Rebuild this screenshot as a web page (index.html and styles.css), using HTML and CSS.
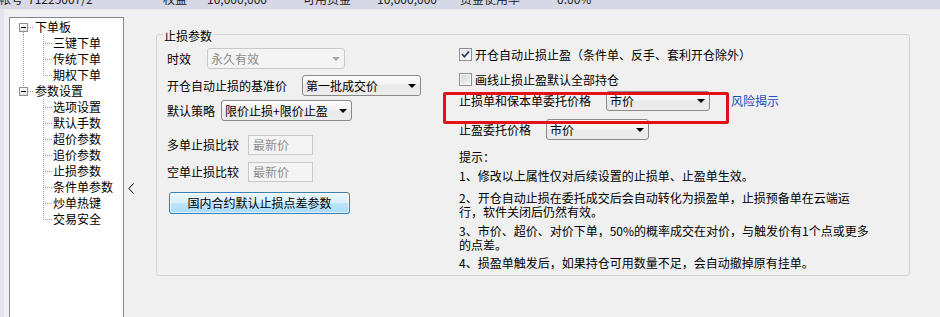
FILE: index.html
```html
<!DOCTYPE html>
<html lang="zh-CN">
<head>
    <meta charset="UTF-8">
    <title>止损参数</title>
    <link rel="stylesheet" href="styles.css">
</head>
<body>
    <div class="topbar">
        <div class="topbar-text">
            <span>资金帐号</span>
            <span>71225007/2</span>
            <span>权益</span>
            <span>10,000,000</span>
            <span>可用资金</span>
            <span>10,000,000</span>
            <span>资金使用率</span>
            <span>0.00%</span>
        </div>
    </div>

    <div class="main">
        <div class="edge"></div>

        <div class="tree">
            <div class="node root first"><span class="toggle"></span><span class="twig"></span><span class="label">下单板</span></div>
            <div class="node leaf cont"><span class="branch"></span><span class="label">三键下单</span></div>
            <div class="node leaf cont"><span class="branch"></span><span class="label">传统下单</span></div>
            <div class="node leaf cont last"><span class="branch"></span><span class="label">期权下单</span></div>
            <div class="node root second"><span class="toggle"></span><span class="twig"></span><span class="label">参数设置</span></div>
            <div class="node leaf"><span class="branch"></span><span class="label">选项设置</span></div>
            <div class="node leaf"><span class="branch"></span><span class="label">默认手数</span></div>
            <div class="node leaf"><span class="branch"></span><span class="label">超价参数</span></div>
            <div class="node leaf"><span class="branch"></span><span class="label">追价参数</span></div>
            <div class="node leaf"><span class="branch"></span><span class="label">止损参数</span></div>
            <div class="node leaf"><span class="branch"></span><span class="label">条件单参数</span></div>
            <div class="node leaf"><span class="branch"></span><span class="label">炒单热键</span></div>
            <div class="node leaf last"><span class="branch"></span><span class="label">交易安全</span></div>
        </div>

        <div class="collapse">
            <svg width="6" height="11" viewBox="0 0 6 11"><polyline points="5.5,0.5 0.8,5.5 5.5,10.5" fill="none" stroke="#000" stroke-width="1"/></svg>
        </div>

        <fieldset class="group">
            <legend>止损参数</legend>
            <div class="cols">
                <div class="col-left">
                    <div class="row">
                        <span class="lbl lbl-validity">时效</span>
                        <div class="combo disabled combo-validity"><span>永久有效</span><i class="arrow"></i></div>
                    </div>
                    <div class="row row-base">
                        <span class="lbl lbl-base">开仓自动止损的基准价</span>
                        <div class="combo combo-base"><span>第一批成交价</span><i class="arrow"></i></div>
                    </div>
                    <div class="row row-strategy">
                        <span class="lbl lbl-strategy">默认策略</span>
                        <div class="combo combo-strategy"><span>限价止损+限价止盈</span><i class="arrow"></i></div>
                    </div>
                    <div class="row row-long">
                        <span class="lbl lbl-compare">多单止损比较</span>
                        <div class="textbox">最新价</div>
                    </div>
                    <div class="row row-short">
                        <span class="lbl lbl-compare">空单止损比较</span>
                        <div class="textbox">最新价</div>
                    </div>
                    <button class="btn">国内合约默认止损点差参数</button>
                </div>

                <div class="col-right">
                    <div class="check-row">
                        <span class="checkbox checked">
                            <svg width="11" height="11" viewBox="0 0 11 11"><path d="M2 5.2 L4.4 7.8 L9 2.4" fill="none" stroke="#2b3a5c" stroke-width="1.7"/></svg>
                        </span>
                        <span>开仓自动止损止盈（条件单、反手、套利开仓除外）</span>
                    </div>
                    <div class="check-row check-second">
                        <span class="checkbox"></span>
                        <span>画线止损止盈默认全部持仓</span>
                    </div>
                    <div class="row row-order">
                        <div class="highlight">
                            <span class="lbl lbl-order">止损单和保本单委托价格</span>
                            <div class="combo combo-order"><span>市价</span><i class="arrow"></i></div>
                        </div>
                        <a class="risk-link" href="#">风险揭示</a>
                    </div>
                    <div class="row row-profit">
                        <span class="lbl lbl-profit">止盈委托价格</span>
                        <div class="combo combo-profit"><span>市价</span><i class="arrow"></i></div>
                    </div>
                    <div class="tips">
                        <p>提示：</p>
                        <p class="tip-1">1、修改以上属性仅对后续设置的止损单、止盈单生效。</p>
                        <p class="tip-2">2、开仓自动止损在委托成交后会自动转化为损盈单，止损预备单在云端运<br>行，软件关闭后仍然有效。</p>
                        <p class="tip-3">3、市价、超价、对价下单，50%的概率成交在对价，与触发价有1个点或更多<br>的点差。</p>
                        <p class="tip-4">4、损盈单触发后，如果持仓可用数量不足，会自动撤掉原有挂单。</p>
                    </div>
                </div>
            </div>
        </fieldset>
    </div>
</body>
</html>
```

FILE: styles.css
```css
* {
    box-sizing: border-box;
    margin: 0;
    padding: 0;
}

html, body {
    width: 940px;
    height: 317px;
    overflow: hidden;
}

body {
    background: #f0f0f0;
    color: #000;
    font-family: "Noto Sans CJK SC", "Noto Sans", sans-serif;
    font-size: 12px;
    line-height: 14px;
    text-spacing-trim: space-all;
}

/* 顶部资金栏（被裁掉一半） */
.topbar {
    height: 10px;
    background: #d6d9e5;
    border-bottom: 1px solid #e9eaf0;
    overflow: hidden;
}

.topbar-text {
    display: grid;
    grid-template-columns: 53px 135px 44px 96px 74px 83px 97px auto;
    margin-left: -25px;
    margin-top: -8px;
    white-space: nowrap;
    color: #202020;
}

.main {
    display: flex;
    align-items: flex-start;
}

.edge {
    width: 4px;
    height: 307px;
    margin-right: 5px;
    background: #e2e3ec;
}

/* 左侧树 */
.tree {
    width: 115px;
    height: 300px;
    margin-top: 7px;
    padding-top: 1px;
    background: #fff;
    border: 1px solid #828790;
    border-bottom: 0;
    line-height: 16px;
}

.node {
    display: flex;
    align-items: center;
    height: 16px;
    white-space: nowrap;
}

.toggle {
    width: 9px;
    height: 9px;
    margin-left: 9px;
    border: 1px solid #919191;
    background:
        linear-gradient(#000, #000) center / 5px 1px no-repeat,
        linear-gradient(#fff, #e3e3e3);
}

.twig {
    width: 6px;
    height: 16px;
    background: repeating-linear-gradient(90deg, #a0a0a0 0 1px, transparent 1px 2px) 0 8px / 6px 1px no-repeat;
}

.root .label {
    margin-left: 1px;
}

.branch {
    width: 9px;
    height: 16px;
    margin-left: 33px;
    background:
        repeating-linear-gradient(90deg, #a0a0a0 0 1px, transparent 1px 2px) 0 8px / 9px 1px no-repeat,
        repeating-linear-gradient(#a0a0a0 0 1px, transparent 1px 2px) 0 0 / 1px 16px no-repeat;
}

.leaf.last .branch {
    background:
        repeating-linear-gradient(90deg, #a0a0a0 0 1px, transparent 1px 2px) 0 8px / 9px 1px no-repeat,
        repeating-linear-gradient(#a0a0a0 0 1px, transparent 1px 2px) 0 0 / 1px 9px no-repeat;
}

.leaf .label {
    margin-left: 1px;
}

.root.first {
    background: repeating-linear-gradient(#a0a0a0 0 1px, transparent 1px 2px) 13px 13px / 1px 3px no-repeat;
}

.root.second {
    background: repeating-linear-gradient(#a0a0a0 0 1px, transparent 1px 2px) 13px 0 / 1px 4px no-repeat;
}

.leaf.cont {
    background: repeating-linear-gradient(#a0a0a0 0 1px, transparent 1px 2px) 13px 0 / 1px 16px no-repeat;
}

.collapse {
    width: 32px;
    padding: 173px 0 0 4px;
}

.collapse svg {
    display: block;
}

/* 分组框 */
.group {
    width: 754px;
    height: 251px;
    margin-top: 15px;
    padding: 5px 10px 0 10px;
    border: 1px solid #d5d5d5;
    border-radius: 3px;
}

.group legend {
    margin-left: -4px;
    padding: 4px 1px 0;
    line-height: 14px;
}

.cols {
    display: flex;
}

.col-left {
    width: 292px;
    display: flex;
    flex-direction: column;
    align-items: flex-start;
}

.col-right {
    display: flex;
    flex-direction: column;
    align-items: flex-start;
}

.row {
    display: flex;
    align-items: center;
    height: 21px;
    white-space: nowrap;
}

.row-base { margin-top: 6px; }
.row-strategy { margin-top: 4px; }
.row-long { margin-top: 14px; height: 20px; }
.row-short { margin-top: 7px; height: 20px; }

.lbl-validity { width: 40px; }
.lbl-base { width: 135px; }
.lbl-strategy { width: 54px; }
.lbl-compare { width: 81px; }
.lbl-order { width: 147px; }
.lbl-profit { width: 87px; }

/* 下拉框 */
.combo {
    display: flex;
    align-items: center;
    justify-content: space-between;
    height: 21px;
    padding: 0 4px 0 3px;
    border: 1px solid #8a8a8a;
    border-radius: 3px;
    background: linear-gradient(#fcfcfc, #f1f1f1 50%, #e9e9e9 50%, #ececec);
}

.combo .arrow {
    width: 0;
    height: 0;
    border-left: 4px solid transparent;
    border-right: 4px solid transparent;
    border-top: 4px solid #000;
}

.combo.disabled {
    border-color: #c9c9c9;
    background: #f4f4f4;
    color: #8d8d8d;
}

.combo.disabled .arrow {
    border-top-color: #a6a6a6;
}

.combo-validity { width: 138px; }
.combo-base { width: 119px; }
.combo-strategy { width: 131px; }
.combo-order { width: 104px; height: 20px; }
.combo-profit { width: 103px; }

.textbox {
    width: 65px;
    height: 20px;
    padding-left: 4px;
    border: 1px solid #c8c8c8;
    background: #f4f4f4;
    color: #8d8d8d;
    line-height: 18px;
}

.btn {
    width: 181px;
    height: 22px;
    margin: 10px 0 0 2px;
    border: 1px solid #3c7fb1;
    border-radius: 3px;
    background: linear-gradient(#eaf6fd, #d9f0fc 50%, #bee6fd 50%, #a9dbf6);
    box-shadow: inset 0 0 0 1px rgba(255, 255, 255, 0.6);
    font: inherit;
    color: #000;
}

/* 右列 */
.check-row {
    display: flex;
    align-items: center;
    height: 13px;
    white-space: nowrap;
}

.check-second { margin-top: 12px; }

.checkbox {
    display: flex;
    align-items: center;
    justify-content: center;
    width: 13px;
    height: 13px;
    margin-right: 3px;
    border: 1px solid #8e8f8f;
    background: linear-gradient(135deg, #d3d5d9, #f7f7f7);
    box-shadow: inset 0 0 0 1px #f4f4f4;
}

.checkbox.checked {
    background: linear-gradient(135deg, #dfe4ee, #fbfbfd);
}

.row-order {
    margin-top: 5px;
    height: 20px;
}

.highlight {
    position: relative;
    display: flex;
    align-items: center;
}

/* 截图里手画的红框 */
.highlight::after {
    content: "";
    position: absolute;
    left: -16px;
    top: 1px;
    width: 280px;
    height: 26px;
    border: 3px solid #e3101c;
    border-radius: 2px;
    pointer-events: none;
}

.risk-link {
    margin-left: 21px;
    color: #1b4fc4;
    text-decoration: none;
}

.row-profit { margin-top: 8px; }

.tips {
    margin-top: 10px;
    white-space: nowrap;
}

.tip-1 { margin-top: 5px; }
.tip-2 { margin-top: 8px; }
.tip-3 { margin-top: 5px; }
.tip-4 { margin-top: 4px; }
```
